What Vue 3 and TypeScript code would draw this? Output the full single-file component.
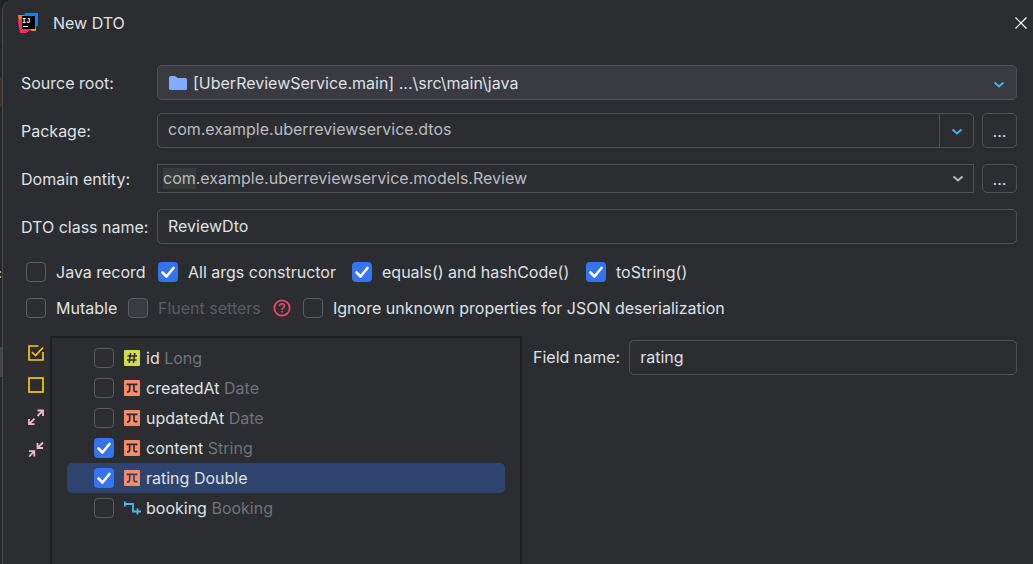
<script setup lang="ts">
import { ref } from 'vue'

type FieldKind = 'id' | 'property' | 'relation'

interface EntityField {
  name: string
  type: string
  kind: FieldKind
  included: boolean
}

const sourceRoot = ref('[UberReviewService.main] ...\\src\\main\\java')
const packageName = ref('com.example.uberreviewservice.dtos')
const domainEntity = ref('com.example.uberreviewservice.models.Review')
const className = ref('ReviewDto')

const javaRecord = ref(false)
const allArgs = ref(true)
const equalsHash = ref(true)
const withToString = ref(true)
const mutable = ref(false)
const fluent = ref(false)
const ignoreUnknown = ref(false)

const fields = ref<EntityField[]>([
  { name: 'id', type: 'Long', kind: 'id', included: false },
  { name: 'createdAt', type: 'Date', kind: 'property', included: false },
  { name: 'updatedAt', type: 'Date', kind: 'property', included: false },
  { name: 'content', type: 'String', kind: 'property', included: true },
  { name: 'rating', type: 'Double', kind: 'property', included: true },
  { name: 'booking', type: 'Booking', kind: 'relation', included: false },
])
const selected = ref(4)
const fieldName = ref('rating')

function select(index: number) {
  selected.value = index
  fieldName.value = fields.value[index].name
}

function setAll(included: boolean) {
  fields.value.forEach((f) => (f.included = included))
}
</script>

<template>
  <div class="backdrop">
    <div class="editor-edge" aria-hidden="true"><span class="edge-text">c</span></div>
    <main class="dialog">
      <header class="titlebar">
        <svg class="logo" viewBox="0 0 20 20" aria-hidden="true">
          <path d="M0 2h9v16H2z" fill="#ff7a1a" />
          <path d="M0 8l5-4 9 12-6 4H2z" fill="#fb2a5d" />
          <path d="M12 14h6v4h-5z" fill="#ff8a1c" />
          <path d="M7 0h13v12l-3 3L5 4z" fill="#1182fb" />
          <rect x="4" y="3" width="13" height="13" fill="#000" />
          <text x="4" y="10" class="logo-text">IJ</text>
          <rect x="5" y="13" width="5" height="1" fill="#fff" />
        </svg>
        <h1>New DTO</h1>
        <button class="close" type="button" aria-label="Close">
          <svg width="12" height="12" viewBox="0 0 12 12"><path d="M0.5 0.5l11 11M11.5 0.5l-11 11" stroke="#fff" stroke-width="1.2" /></svg>
        </button>
      </header>

      <form class="form" @submit.prevent>
        <div class="row">
          <label for="source">Source root:</label>
          <div class="control select-box">
            <svg class="folder" width="18" height="14" viewBox="0 0 18 14" aria-hidden="true"><path d="M0 1.5Q0 0 1.5 0H6l2.5 2h8Q18 2 18 3.500V12.500Q18 14 16.500 14h-15Q0 14 0 12.500z" fill="#83acff" /></svg>
            <select id="source" v-model="sourceRoot">
              <option>{{ sourceRoot }}</option>
            </select>
            <svg class="select-arrow blue" width="12" height="8" viewBox="0 0 12 8" aria-hidden="true"><path d="M1.500 1.500L6 5.500l4.500-4" /></svg>
          </div>
        </div>

        <div class="row">
          <label for="package">Package:</label>
          <div class="control combo">
            <input id="package" v-model="packageName" class="muted" type="text" spellcheck="false" />
            <button class="drop divided" type="button" aria-label="Recent packages">
              <svg class="blue" width="12" height="8" viewBox="0 0 12 8"><path d="M1.500 2.500L6 6.500l4.500-4" /></svg>
            </button>
          </div>
          <button class="browse" type="button" aria-label="Browse packages">...</button>
        </div>

        <div class="row">
          <label for="entity">Domain entity:</label>
          <div class="control combo square">
            <span class="match" aria-hidden="true"></span>
            <input id="entity" v-model="domainEntity" class="muted" type="text" spellcheck="false" />
            <button class="drop" type="button" aria-label="Show entities">
              <svg class="gray" width="12" height="8" viewBox="0 0 12 8"><path d="M1.500 1.500L6 5.500l4.500-4" /></svg>
            </button>
          </div>
          <button class="browse short" type="button" aria-label="Browse entities">...</button>
        </div>

        <div class="row">
          <label for="class-name">DTO class name:</label>
          <input id="class-name" v-model="className" class="control text" type="text" spellcheck="false" />
        </div>

        <div class="options">
          <div class="option-row generation">
            <label class="check"><input v-model="javaRecord" type="checkbox" />Java record</label>
            <label class="check"><input v-model="allArgs" type="checkbox" />All args constructor</label>
            <label class="check"><input v-model="equalsHash" type="checkbox" />equals() and hashCode()</label>
            <label class="check"><input v-model="withToString" type="checkbox" />toString()</label>
          </div>
          <div class="option-row mutability">
            <label class="check"><input v-model="mutable" type="checkbox" />Mutable</label>
            <label class="check disabled"><input v-model="fluent" type="checkbox" disabled />Fluent setters</label>
            <button class="help" type="button" aria-label="Help">
              <svg width="18" height="18" viewBox="0 0 18 18" fill="none" stroke="#f2496b">
                <circle cx="9" cy="9" r="7.700" stroke-width="1.700" />
                <path d="M6.500 7.200Q6.600 4.800 9 4.800t2.500 2.200q0 1.200-1.300 1.900T9 10.700" stroke-width="1.600" />
                <path d="M9 11.900v1.700" stroke-width="1.700" />
              </svg>
            </button>
            <label class="check"><input v-model="ignoreUnknown" type="checkbox" />Ignore unknown properties for JSON deserialization</label>
          </div>
        </div>
      </form>

      <section class="body">
        <div class="toolbar" role="toolbar" aria-label="Field selection">
          <button type="button" aria-label="Select all" @click="setAll(true)">
            <svg width="16" height="16" viewBox="0 0 16 16" fill="none" stroke="#f8c907" stroke-width="1.700"><path d="M10.500 1H1v14h14V7M4 7l3.500 3.500L15 2.500" /></svg>
          </button>
          <button type="button" aria-label="Unselect all" @click="setAll(false)">
            <svg width="16" height="16" viewBox="0 0 16 16" fill="none" stroke="#f8c907" stroke-width="1.700"><rect x="1" y="1" width="14" height="14" /></svg>
          </button>
          <button type="button" aria-label="Expand all">
            <svg width="16" height="16" viewBox="0 0 16 16" fill="none" stroke="#f5b5d0" stroke-width="1.800"><path d="M9.500 1.500H15v5.500M15 1.500L9.500 7M1 10v5.200h5.500M1 15.200l5.500-5.500" /></svg>
          </button>
          <button type="button" aria-label="Collapse all">
            <svg width="16" height="16" viewBox="0 0 16 16" fill="none" stroke="#f5b5d0" stroke-width="1.800"><path d="M9.500 2v5h5.500M9.500 7L15 1.500M1 10.200h5.300v5.300M6.300 10.200L1.200 15.500" /></svg>
          </button>
        </div>

        <ul class="fields">
          <li v-for="(f, i) in fields" :key="f.name" :class="{ selected: i === selected }" @click="select(i)">
            <input v-model="f.included" type="checkbox" :aria-label="f.name" @click.stop />
            <svg v-if="f.kind === 'id'" class="kind" width="16" height="16" viewBox="0 0 16 16" aria-hidden="true">
              <rect width="16" height="16" rx="1" fill="#cfdd4f" />
              <path d="M6.500 3L5.300 13M10.700 3L9.500 13M3.500 6h9.500M3 10h9.500" stroke="#2b2d30" stroke-width="1.600" />
            </svg>
            <svg v-else-if="f.kind === 'property'" class="kind" width="16" height="16" viewBox="0 0 16 16" fill="none" aria-hidden="true">
              <rect width="16" height="16" rx="1" fill="#f98b6b" />
              <path d="M2.500 4.300h11M5.700 4.300v5.200q0 2.500-2.700 2.500M10 4.300V10q0 2.200 3.500 1.500" :stroke="i === selected ? '#2e436e' : '#2b2d30'" stroke-width="1.700" />
            </svg>
            <svg v-else class="kind wide" width="18" height="16" viewBox="0 0 18 16" fill="none" stroke="#49b8f0" stroke-width="1.800" aria-hidden="true">
              <path d="M0.900 1.500v5M1 4h8v7.500h8M13.500 8.500v6" />
            </svg>
            <span class="name">{{ f.name }} <span class="type">{{ f.type }}</span></span>
          </li>
        </ul>

        <div class="detail">
          <label for="field-name">Field name:</label>
          <input id="field-name" v-model="fieldName" class="control text" type="text" spellcheck="false" />
        </div>
      </section>
    </main>
  </div>
</template>

<style>
body {
  margin: 0;
  background: #1e1f22;
}
</style>

<style scoped>
* {
  box-sizing: border-box;
}
.backdrop {
  display: flex;
  height: 100vh;
  min-height: 480px;
  overflow: hidden;
  font: 16px/20px Inter, 'Noto Sans', sans-serif;
  color: #dfe1e5;
}
.editor-edge {
  flex: none;
  display: flex;
  justify-content: flex-end;
  width: 2px;
  padding-top: 263px;
  overflow: hidden;
  background: linear-gradient(#232528 46px, #191a1c 46px 47px, #232528 47px 77px, #3f3023 77px 107px, #232528 107px 347px, #43454a 347px 377px, #232528 377px);
}
.dialog {
  flex: 1;
  min-width: 0;
  display: flex;
  flex-direction: column;
  background: #2b2d30;
  border-left: 1px solid #4a4c50;
  border-top-left-radius: 10px;
}
button,
input,
select {
  margin: 0;
  padding: 0;
  font: inherit;
  color: inherit;
  background: none;
  border: 0;
  outline: 0;
}
svg {
  display: block;
  flex: none;
}
.titlebar {
  display: flex;
  align-items: center;
  height: 46px;
  padding: 0 6px 0 15px;
}
.logo {
  width: 20px;
  height: 20px;
}
.logo-text {
  font: bold 7px 'Liberation Mono', monospace;
  fill: #fff;
}
h1 {
  flex: 1;
  margin: 0 0 0 15px;
  font: inherit;
}
.form {
  display: flex;
  flex-direction: column;
  gap: 13px;
  padding: 19px 16px 18px 18px;
}
.row {
  display: flex;
  align-items: center;
  height: 35px;
}
.row > label {
  flex: none;
  width: 136px;
}
.control {
  flex: 1;
  min-width: 0;
  height: 35px;
  border: 1px solid #4e5157;
  border-radius: 5px;
}
.text {
  padding: 0 10px 2px;
}
.select-box {
  position: relative;
  background: #393b40;
}
.select-box select {
  width: 100%;
  height: 100%;
  padding-left: 35px;
  appearance: none;
}
.folder {
  position: absolute;
  left: 11px;
  top: 10px;
}
.select-arrow {
  position: absolute;
  right: 11px;
  top: 15px;
  pointer-events: none;
}
.blue,
.gray {
  fill: none;
  stroke-width: 2;
}
.blue {
  stroke: #46b0ec;
}
.gray {
  stroke: #b4b8bf;
}
.combo {
  display: flex;
}
.combo input {
  flex: 1;
  min-width: 0;
  padding: 0 0 3px 10px;
}
.muted {
  color: #b9bcc2;
}
.drop {
  display: flex;
  align-items: center;
  justify-content: center;
  width: 34px;
}
.divided {
  border-left: 1px solid #4e5157;
}
.square {
  position: relative;
  height: 29px;
  border-radius: 0;
}
.square input {
  position: relative;
  padding: 0 0 2px 5px;
}
.square .drop {
  width: 30px;
}
.match {
  position: absolute;
  left: 5px;
  top: 3px;
  width: 33px;
  height: 21px;
  background: #373b39;
}
.browse {
  flex: none;
  width: 35px;
  height: 35px;
  margin-left: 8px;
  border: 1px solid #4e5157;
  border-radius: 5px;
}
.browse.short {
  height: 29px;
}
.options {
  display: flex;
  flex-direction: column;
  gap: 16px;
  padding: 5px 0 0 5px;
}
.option-row {
  display: grid;
  align-items: center;
  height: 20px;
  white-space: nowrap;
}
.generation {
  grid-template-columns: 132px 194px 234px auto;
}
.mutability {
  grid-template-columns: 102px 145px 30px auto;
}
.check {
  display: flex;
  align-items: center;
  gap: 10px;
}
.disabled {
  color: #5a5d63;
}
input[type='checkbox'] {
  flex: none;
  width: 20px;
  height: 20px;
  appearance: none;
  border: 1px solid #5a5d63;
  border-radius: 4px;
}
input[type='checkbox']:disabled {
  background: #393b40;
}
input[type='checkbox']:checked {
  border: 0;
  background: #3574f0 url("data:image/svg+xml,%3Csvg xmlns='http://www.w3.org/2000/svg' viewBox='0 0 20 20'%3E%3Cpath d='M4.500 10.500l4 4 7-8.500' fill='none' stroke='white' stroke-width='2.600' stroke-linecap='round' stroke-linejoin='round'/%3E%3C/svg%3E");
}
.body {
  flex: 1;
  min-height: 0;
  display: grid;
  grid-template-columns: 29px minmax(0, 41fr) minmax(0, 43fr);
  padding: 0 16px 0 18px;
}
.toolbar {
  display: flex;
  flex-direction: column;
  padding-top: 1px;
}
.toolbar button {
  display: flex;
  align-items: center;
  height: 32px;
  padding: 0 6px 0 7px;
}
.fields {
  margin: 0;
  padding: 5px 15px 0;
  list-style: none;
  border: 2px solid #1e1f22;
  border-bottom: 0;
}
.fields li {
  display: flex;
  align-items: center;
  height: 30px;
  padding-left: 27px;
  border-radius: 5px;
}
.kind {
  margin: 0 6px 0 10px;
}
.kind.wide {
  margin-right: 4px;
}
.type {
  color: #6f737a;
}
.selected {
  background: #2e436e;
}
.selected .type {
  color: inherit;
}
.detail {
  display: flex;
  align-items: flex-start;
  gap: 9px;
  padding: 4px 0 0 11px;
}
.detail label {
  line-height: 35px;
}
</style>
